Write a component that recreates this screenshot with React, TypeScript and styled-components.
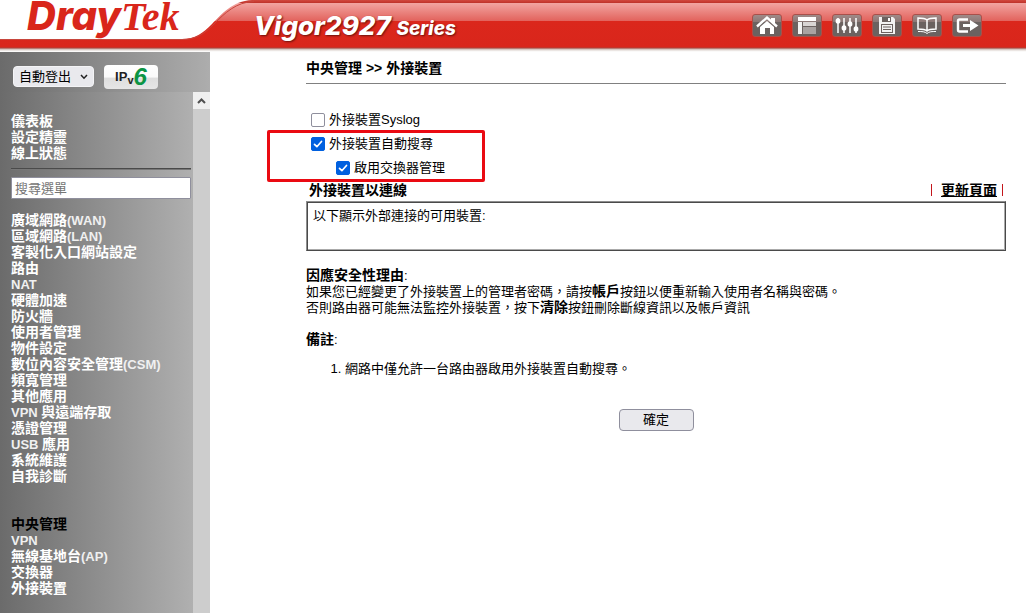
import React from "react";
import styled, { createGlobalStyle } from "styled-components";

const GlobalStyle = createGlobalStyle`
  *, *::before, *::after { box-sizing: border-box; }
  body {
    margin: 0;
    background: #fff;
    color: #000;
    font: 13px/16px "Liberation Sans", "Noto Sans CJK TC", sans-serif;
  }
  button, input, select { font: inherit; color: inherit; }
`;

const Page = styled.div`
  display: flex;
  flex-direction: column;
  min-height: 100vh;
`;

/* ---------- header ---------- */

const Header = styled.header`
  display: flex;
  height: 52px;
  border-bottom: 1px solid #fbfaf9;
  background: linear-gradient(
    to bottom,
    #cf4a40 0px, #c8392f 2px, #b9332b 3px,
    #f2a5a1 3px, #e2625c 21px,
    #db271c 21px, #d9261b 47px,
    #a8453d 48px, #c9b3ac 49px, #e4ddd9 50px, #f3efed 51px
  );
`;

const Brand = styled.div`
  display: grid;
  flex: none;
  width: 254px;
  height: 48px;

  > * { grid-area: 1 / 1; }
`;

const Wordmark = styled.div`
  display: flex;
  align-items: baseline;
  padding-left: 27px;
  color: #d9261b;
  font-style: italic;
  line-height: 32px;
`;

const WordSans = styled.span`
  font-family: Inter, sans-serif;
  font-size: 40px;
  font-weight: 800;
`;

const WordSerif = styled.span`
  font-family: "Liberation Serif", serif;
  font-size: 40px;
  font-weight: 700;
`;

const Model = styled.h1`
  flex: 1;
  margin: 0;
  color: #fff;
  font: italic 800 26px/52px Inter, sans-serif;
  text-shadow: 1px 1px 2px #6b120c;
  white-space: nowrap;

  small { font-size: 19px; }
`;

const Tools = styled.nav`
  display: flex;
  gap: 10px;
  padding: 14px 44px 0 0;
`;

const ToolButton = styled.button`
  display: block;
  width: 30px;
  height: 23px;
  padding: 0;
  border: 1px solid #a9504a;
  border-radius: 3px;
  background: linear-gradient(to bottom, #a08a88 0, #8b7876 7px, #6b6260 7px, #6b6260 100%);

  svg { display: block; }
`;

/* ---------- sidebar ---------- */

const Body = styled.div`
  display: flex;
  flex: 1;
`;

const Sidebar = styled.aside`
  display: flex;
  flex-direction: column;
  flex: none;
  width: 210px;
`;

const SessionBar = styled.div`
  display: flex;
  align-items: flex-start;
  gap: 10px;
  height: 40px;
  padding: 13px 13px 0;
  background: linear-gradient(to right, #6b6b6b, #adadad);
`;

const SelectWrap = styled.label`
  display: grid;
  align-items: center;
  width: 81px;
  margin-top: 1px;

  > * { grid-area: 1 / 1; }
  svg { justify-self: end; margin-right: 6px; pointer-events: none; }
`;

const Select = styled.select`
  width: 100%;
  height: 21px;
  padding: 0 5px;
  border: 1px solid #f4f4f6;
  border-radius: 4px;
  background: #e9e9ed;
  appearance: none;
`;

const Ipv6Button = styled.button`
  display: flex;
  justify-content: center;
  width: 54px;
  height: 24px;
  padding: 0;
  border: 0;
  border-radius: 4px;
  background: linear-gradient(to bottom, #fff 0, #fafafa 50%, #dedede 55%, #e6e6e6 100%);
  color: #222;
  font: 700 13px/24px "Liberation Sans", sans-serif;

  sub { font-size: 11px; line-height: 30px; vertical-align: baseline; }
  em { color: #0b9444; font-size: 24px; line-height: 24px; }
`;

const MenuPane = styled.div`
  display: flex;
  flex: 1;
`;

const Menu = styled.nav`
  flex: 1;
  padding: 21px 2px 16px 11px;
  background: linear-gradient(to right, #6b6b6b, #b0b0b0);

  hr {
    height: 2px;
    margin: 7px 0;
    border: 0;
    border-top: 1px solid #4a4a4a;
    background: #777;
  }
`;

const MenuList = styled.ul<{ $gap?: number }>`
  margin: ${(p) => p.$gap ?? 0}px 0 0;
  padding: 0;
  list-style: none;
`;

const MenuLink = styled.a<{ $current?: boolean }>`
  display: block;
  color: ${(p) => (p.$current ? "#000" : "#fff")};
  font-size: 14px;
  font-weight: 700;
  line-height: 16px;
  height: 16px;
  text-decoration: none;
  white-space: nowrap;
`;

const Latin = styled.span`
  color: #f0f0f0;
  font-size: 13px;
`;

const Search = styled.input`
  display: block;
  width: 100%;
  height: 22px;
  padding: 0 3px;
  border: 1px solid #8f8f9d;
  border-radius: 1px;
  background: #fff;

  &::placeholder { color: #757575; opacity: 1; }
`;

const Scrollbar = styled.div`
  width: 17px;
  background: #cdcdcd;
`;

const ScrollUp = styled.button`
  display: grid;
  place-items: center;
  width: 17px;
  height: 17px;
  padding: 0;
  border: 0;
  background: #f0f0f0;
`;

/* ---------- content ---------- */

const Main = styled.main`
  flex: 1;
  min-width: 0;
  padding: 8px 20px 24px 96px;
`;

const Crumb = styled.h2`
  margin: 0;
  padding-bottom: 7px;
  border-bottom: 1px solid #808080;
  font-size: 14px;
  line-height: 16px;
`;

const Options = styled.div`
  padding: 24px 0 0 5px;
`;

const Highlighted = styled.div`
  position: relative;
`;

const Marker = styled.div`
  position: absolute;
  top: -2px;
  left: -44px;
  width: 218px;
  height: 52px;
  border: 3px solid #ea0a12;
  border-radius: 2px;
  pointer-events: none;
`;

const Option = styled.label<{ $nested?: boolean }>`
  display: flex;
  align-items: center;
  gap: 4px;
  height: 24px;
  padding-left: ${(p) => (p.$nested ? 25 : 0)}px;
`;

const CheckBox = styled.input`
  width: 14px;
  height: 14px;
  margin: 0;
  border: 1px solid #8f8f9d;
  border-radius: 2px;
  background: #fff;
  appearance: none;

  &:checked {
    border-color: #0060df;
    background: #0060df
      url("data:image/svg+xml,%3Csvg xmlns='http://www.w3.org/2000/svg' viewBox='0 0 12 12'%3E%3Cpath d='M2.5 6.3l2.4 2.4 4.6-5.2' fill='none' stroke='%23fff' stroke-width='1.7' stroke-linecap='round' stroke-linejoin='round'/%3E%3C/svg%3E");
  }
`;

const PanelHead = styled.div`
  display: flex;
  justify-content: space-between;
  align-items: center;
  height: 21px;
  padding: 0 3px 2px;
`;

const PanelTitle = styled.h3`
  margin: 0;
  font-size: 14px;
  line-height: 16px;
`;

const Refresh = styled.a`
  color: #000;
  font-size: 14px;
  font-weight: 700;
`;

const Bars = styled.div`
  display: flex;
  padding: 0 5px 0 9px;
  border: solid #c4161c;
  border-width: 0 1px;
  line-height: 12px;
`;

const Panel = styled.div`
  min-height: 50px;
  padding: 6px;
  border: 1px solid;
  border-color: #8e8e8e #4a4a4a #4a4a4a #8e8e8e;
  box-shadow: inset 1px 1px 0 #4a4a4a, inset -1px -1px 0 #aaa;
`;

const Notes = styled.section`
  display: flex;
  flex-direction: column;
  gap: 16px;
  padding-top: 17px;
`;

const Note = styled.p`
  margin: 0;

  b { font-size: 14px; line-height: 12px; }
`;

const NoteList = styled.ol`
  margin: 13px 0 0;
  padding-left: 39px;
`;

const Actions = styled.div`
  display: flex;
  justify-content: center;
  margin-top: 32px;
`;

const Submit = styled.button`
  width: 75px;
  height: 22px;
  padding: 0;
  border: 1px solid #8f8f9d;
  border-radius: 4px;
  background: #e9e9ed;
`;

/* ---------- icons ---------- */

const tools: { label: string; art: React.ReactNode }[] = [
  {
    label: "Home",
    art: (
      <>
        <path d="M4 11.5 14 2.5 24 11.5" fill="none" stroke="#fff" strokeWidth="2.4" />
        <path d="M18 3h4v6l-4-3.500z" fill="#fff" />
        <path d="M7 12 14 6l7 6v7h-4v-6h-5v6H7z" fill="#fff" />
      </>
    ),
  },
  {
    label: "Overview",
    art: (
      <>
        <path d="M5 2h18v4H5z" fill="#fff" />
        <path d="M5 7h4V19H5z" fill="#f2f2f2" />
        <path d="M10 7h13v4H10z" fill="#d9d5d4" />
        <path d="M10 12h13v7H10z" fill="#a9a3a2" />
      </>
    ),
  },
  {
    label: "Settings",
    art: (
      <>
        <path d="M5 3v15M11 3v15M17 3v15M23 3v15" stroke="#fff" strokeWidth="1.500" />
        <g fill="#fff">
          <ellipse cx="5" cy="6" rx="2.400" ry="2.800" />
          <ellipse cx="11" cy="13" rx="2.400" ry="2.800" />
          <ellipse cx="17" cy="9" rx="2.400" ry="2.800" />
          <ellipse cx="23" cy="14" rx="2.400" ry="2.800" />
        </g>
      </>
    ),
  },
  {
    label: "Save",
    art: (
      <>
        <path d="M6 2h14l2 2v15H6z" fill="#f2f2f2" />
        <path d="M9 2h9v5H9z" fill="#6b6260" />
        <path d="M15 3h2v3h-2z" fill="#fff" />
        <path d="M8 9h12v9H8z" fill="#6b6260" />
        <path d="M9 10h10v7H9z" fill="#f2f2f2" />
        <path d="M10 12h8M10 14.500h8" stroke="#6b6260" />
      </>
    ),
  },
  {
    label: "Manual",
    art: (
      <g fill="none" stroke="#fff" strokeWidth="1.500">
        <path d="M14 5C12 3 9 3 5 3v11c4 0 7 0 9 2 2-2 5-2 9-2V3c-4 0-7 0-9 2zM14 5v11" />
        <path d="M5 16.500c4 0 7 0 9 2 2-2 5-2 9-2" strokeWidth="1" />
      </g>
    ),
  },
  {
    label: "Logout",
    art: (
      <>
        <path d="M15 4.500H6.500Q5 4.500 5 6v9q0 1.500 1.500 1.500H15" fill="none" stroke="#fff" strokeWidth="2.400" />
        <path d="M10 9h7V5l8.500 5.500L17 16v-4h-7z" fill="#fff" />
      </>
    ),
  },
];

/* ---------- data ---------- */

const topMenu = ["儀表板", "設定精靈", "線上狀態"];

const mainMenu = [
  "廣域網路(WAN)",
  "區域網路(LAN)",
  "客製化入口網站設定",
  "路由",
  "NAT",
  "硬體加速",
  "防火牆",
  "使用者管理",
  "物件設定",
  "數位內容安全管理(CSM)",
  "頻寬管理",
  "其他應用",
  "VPN 與遠端存取",
  "憑證管理",
  "USB 應用",
  "系統維護",
  "自我診斷",
];

const centralMenu = ["中央管理", "VPN", "無線基地台(AP)", "交換器", "外接裝置"];

/* Latin runs are set one size smaller than the Chinese around them. */
function MenuText({ text }: { text: string }) {
  return (
    <>
      {text.split(/([A-Z()]+ ?)/).map((run, i) =>
        i % 2 ? <Latin key={i}>{run}</Latin> : run
      )}
    </>
  );
}

function MenuGroup({ items, gap, current }: { items: string[]; gap?: number; current?: string }) {
  return (
    <MenuList $gap={gap}>
      {items.map((text) => (
        <li key={text}>
          <MenuLink href="#" $current={text === current}>
            <MenuText text={text} />
          </MenuLink>
        </li>
      ))}
    </MenuList>
  );
}

export default function App() {
  return (
    <Page lang="zh-Hant">
      <GlobalStyle />
      <Header>
        <Brand>
          <svg width="254" height="48" viewBox="0 0 254 48" aria-hidden="true">
            <path d="M0 0H252C232 1 222 14 212 24 203 33 195 39 182 39H0z" fill="#fff" />
            <path d="M254 1.500C236 2 225 13 214 24 204 34 196 39.500 182 39.500H0" fill="none" stroke="#c8463d" />
          </svg>
          <Wordmark>
            <WordSans>Dray</WordSans>
            <WordSerif>Tek</WordSerif>
          </Wordmark>
        </Brand>
        <Model>
          Vigor2927 <small>Series</small>
        </Model>
        <Tools>
          {tools.map((tool) => (
            <ToolButton key={tool.label} type="button" aria-label={tool.label}>
              <svg width="28" height="21" viewBox="0 0 28 21" aria-hidden="true">
                {tool.art}
              </svg>
            </ToolButton>
          ))}
        </Tools>
      </Header>

      <Body>
        <Sidebar>
          <SessionBar>
            <SelectWrap>
              <Select aria-label="自動登出" defaultValue="auto">
                <option value="auto">自動登出</option>
              </Select>
              <svg width="8" height="6" viewBox="0 0 8 6" aria-hidden="true">
                <path d="M1 1l3 3.200L7 1" fill="none" stroke="#222" strokeWidth="1.500" />
              </svg>
            </SelectWrap>
            <Ipv6Button type="button">
              IP<sub>v</sub>
              <em>6</em>
            </Ipv6Button>
          </SessionBar>
          <MenuPane>
            <Menu>
              <MenuGroup items={topMenu} />
              <hr />
              <Search type="text" placeholder="搜尋選單" aria-label="搜尋選單" />
              <MenuGroup items={mainMenu} gap={13} />
              <MenuGroup items={centralMenu} gap={32} current="中央管理" />
            </Menu>
            <Scrollbar>
              <ScrollUp type="button" aria-label="Scroll up">
                <svg width="9" height="6" viewBox="0 0 9 6" aria-hidden="true">
                  <path d="M1 5l3.500-3.500L8 5" fill="none" stroke="#505050" strokeWidth="2" />
                </svg>
              </ScrollUp>
            </Scrollbar>
          </MenuPane>
        </Sidebar>

        <Main>
          <Crumb>中央管理 &gt;&gt; 外接裝置</Crumb>
          <Options>
            <Option>
              <CheckBox type="checkbox" />
              外接裝置Syslog
            </Option>
            <Highlighted>
              <Option>
                <CheckBox type="checkbox" defaultChecked />
                外接裝置自動搜尋
              </Option>
              <Option $nested>
                <CheckBox type="checkbox" defaultChecked />
                啟用交換器管理
              </Option>
              <Marker />
            </Highlighted>
          </Options>
          <PanelHead>
            <PanelTitle>外接裝置以連線</PanelTitle>
            <Bars>
              <Refresh href="#">更新頁面</Refresh>
            </Bars>
          </PanelHead>
          <Panel>以下顯示外部連接的可用裝置:</Panel>
          <Notes>
            <Note>
              <b>因應安全性理由</b>:
              <br />
              如果您已經變更了外接裝置上的管理者密碼，請按<b>帳戶</b>按鈕以便重新輸入使用者名稱與密碼。
              <br />
              否則路由器可能無法監控外接裝置，按下<b>清除</b>按鈕刪除斷線資訊以及帳戶資訊
            </Note>
            <Note>
              <b>備註</b>:
            </Note>
          </Notes>
          <NoteList>
            <li>網路中僅允許一台路由器啟用外接裝置自動搜尋。</li>
          </NoteList>
          <Actions>
            <Submit type="button">確定</Submit>
          </Actions>
        </Main>
      </Body>
    </Page>
  );
}
